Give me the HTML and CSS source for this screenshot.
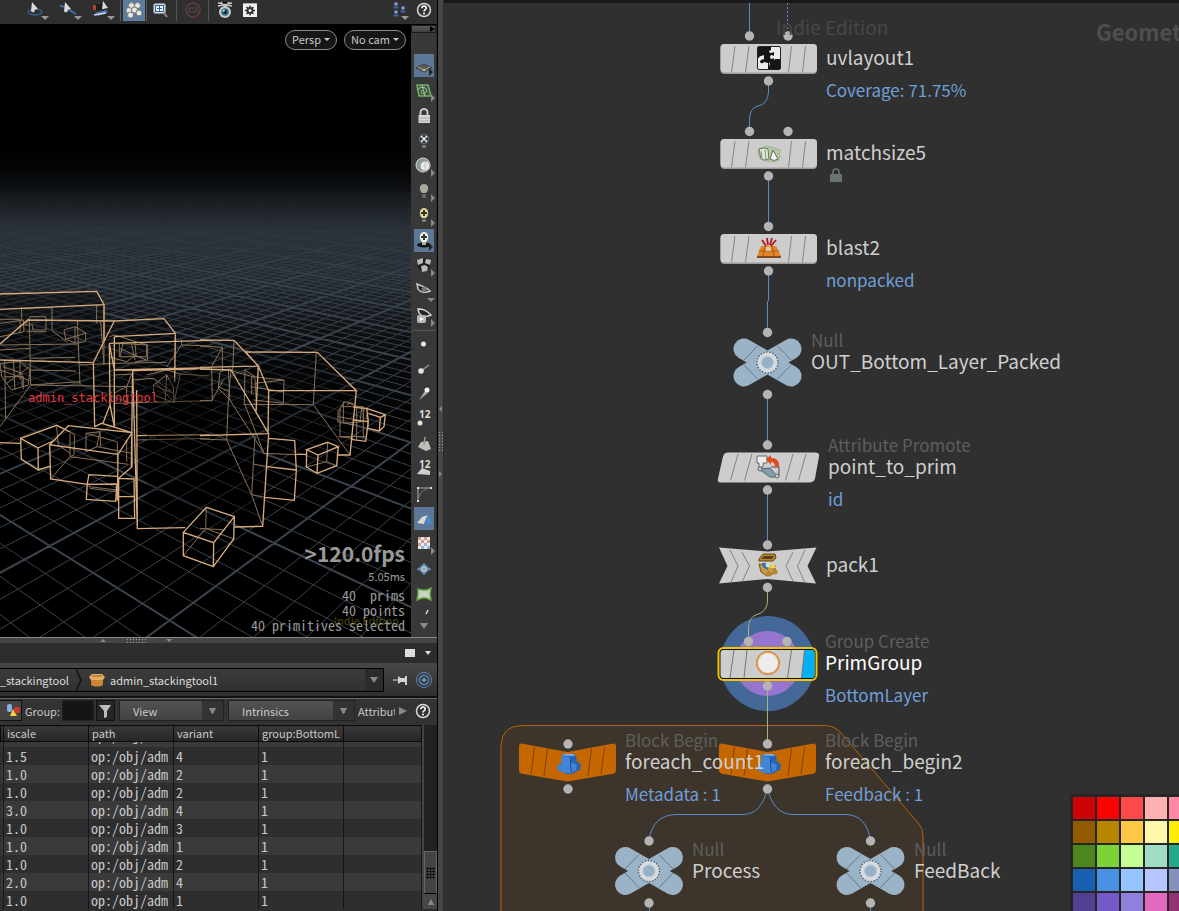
FILE: index.html
```html
<!DOCTYPE html>
<html lang="en">
<head>
<meta charset="utf-8">
<title>admin_stackingtool1</title>
<link rel="stylesheet" href="styles.css">
</head>
<body>
<div class="app">
  <section class="left">
    <header class="topbar">
      <button class="tool wide menu" aria-label="View tool"><svg width="20" height="20" viewBox="0 0 20 20"><ellipse cx="9" cy="12" rx="7" ry="3" fill="none" stroke="#3f5c8c" stroke-width="1.6"/><path d="M6 2l6 7-3 .5-1 3-3-1z" fill="#dcdcdc"/></svg></button>
      <button class="tool wide menu" aria-label="Select tool"><svg width="20" height="20" viewBox="0 0 20 20"><path d="M1 6c5-1 10 5 16 8" fill="none" stroke="#3f6db0" stroke-width="2"/><path d="M6 2l6 7-3 .5-1 3-3-1z" fill="#dcdcdc"/></svg></button>
      <button class="tool wide menu" aria-label="Secure selection"><svg width="20" height="20" viewBox="0 0 20 20"><rect x="3" y="4" width="9" height="6" fill="#1c1c1c"/><path d="M1 5h3v5H1z" fill="#b04334"/><path d="M3 13l11-3 2 2-10 4z" fill="#4c78bb"/><path d="M2 15l12-2" stroke="#cfd5dc" stroke-width="1.5"/><path d="M11 1l5 7-3 .5-3 1z" fill="#dcdcdc"/></svg></button>
      <span class="vsep"></span>
      <button class="tool active" aria-label="Select objects"><svg width="18" height="18" viewBox="0 0 18 18" fill="#e6e6e2" stroke="#77797a"><circle cx="6.500" cy="4.500" r="3"/><circle cx="12.500" cy="4.500" r="3"/><circle cx="4" cy="9.500" r="3"/><circle cx="9.500" cy="9" r="3"/><circle cx="14" cy="12" r="3"/><circle cx="5.500" cy="14" r="3"/></svg></button>
      <span class="vsep tight"></span>
      <button class="tool mid" aria-label="Zoom"><svg width="18" height="18" viewBox="0 0 18 18"><rect x="1.500" y="2.500" width="12" height="10" rx="2" fill="#cdd6e2" stroke="#8a8a8a"/><rect x="3.500" y="4.500" width="8" height="6" fill="#f1f4f8" stroke="#3566a5"/><path d="M5 7.500h5M7.500 5v5" stroke="#3566a5"/><path d="M12 12l3 4" stroke="#888" stroke-width="2"/></svg></button>
      <span class="vsep"></span>
      <button class="tool mid" aria-label="Stop"><svg width="18" height="18" viewBox="0 0 18 18" fill="none" stroke="#6b3a3a"><circle cx="9" cy="9" r="7" stroke-width="1.500"/><rect x="5" y="7" width="8" height="4" stroke="#5d4747"/></svg></button>
      <span class="vsep"></span>
      <button class="tool mid" aria-label="Snapshot"><svg width="18" height="18" viewBox="0 0 18 18"><path d="M2 2l14 3M16 2L2 5M5 1l4 5 4-5" stroke="#ccc" stroke-width="1.300"/><circle cx="9" cy="11" r="6" fill="#c9c9c6"/><circle cx="9" cy="11" r="3.800" fill="#2f7692"/><circle cx="9" cy="11" r="2" fill="#131d22"/><circle cx="7.800" cy="9.800" r="1" fill="#d8eef5"/></svg></button>
      <button class="tool" aria-label="Settings"><svg width="16" height="16" viewBox="0 0 16 16"><rect x="1" y="1" width="14" height="14" fill="#f2f2f2"/><path d="M1 1.500h14" stroke="#aaa"/><circle cx="8" cy="8.500" r="2.500" fill="none" stroke="#333" stroke-width="2"/><path d="M8 3.500v3M8 10.500v3M3 8.500h3M10 8.500h3M4.500 5l2 2M9.500 10l2 2M11.500 5l-2 2M6.500 10l-2 2" stroke="#333" stroke-width="1.500"/></svg></button>
      <span class="grow"></span>
      <button class="tool menu" aria-label="Display options"><svg width="16" height="18" viewBox="0 0 16 18"><g fill="#7fa3d8"><circle cx="4" cy="3" r="1.800"/><circle cx="11" cy="7" r="1.800"/><circle cx="4" cy="11" r="1.800"/></g><path d="M1.500 6.500h5M8.500 10.500h5M1.500 14.500h5" stroke="#3c66a8" stroke-width="2"/></svg></button>
      <button class="tool" aria-label="Help"><svg width="16" height="16" viewBox="0 0 16 16"><circle cx="8" cy="8" r="6.500" fill="#333" stroke="#d8d8d8" stroke-width="1.500"/><path d="M5.800 6.200c0-3 4.600-2.800 4.400 0C10.100 7.700 8 7.700 8 9.600" fill="none" stroke="#fff" stroke-width="1.600"/><circle cx="8" cy="11.600" r="1" fill="#fff"/></svg></button>
    </header>

    <div class="stage">
      <div class="viewport">
        <svg class="scene" aria-label="Perspective view">
          <defs>
            <linearGradient id="sky" x1="0" y1="150" x2="0" y2="440" gradientUnits="userSpaceOnUse"><stop offset="0" stop-color="#000"/><stop offset=".12" stop-color="#080a0c"/><stop offset=".28" stop-color="#262c33"/><stop offset=".45" stop-color="#22282f"/><stop offset=".65" stop-color="#0c0e10"/><stop offset="1" stop-color="#000"/></linearGradient>
            <linearGradient id="fog" x1="0" y1="170" x2="0" y2="640" gradientUnits="userSpaceOnUse"><stop offset="0" stop-color="#000"/><stop offset=".13" stop-color="#555"/><stop offset=".24" stop-color="#ddd"/><stop offset=".4" stop-color="#fff"/><stop offset="1" stop-color="#fff"/></linearGradient>
            <mask id="far" maskUnits="userSpaceOnUse" x="0" y="0" width="2000" height="2000"><rect width="2000" height="2000" fill="url(#fog)"/></mask>
          </defs>
          <g transform="translate(0 -25)">
            <rect y="25" width="100%" height="620" fill="url(#sky)"/>
            <g mask="url(#far)"><path id="minor" class="grid-minor"/><path id="major" class="grid-major"/></g>
            <g transform="translate(0 270) scale(.33333)">
              <path class="shade" d="M0 72L290 64 312 104 312 150 492 146 526 190 526 211 630 211V494L412 497 398 590 0 520Z"/>
              <path class="wire dim" d="M65 112V150M65 115L156 112V182L200 215M0 160L70 150 72 185 0 200M0 148H60V190M75 165L90 140H138V180H98V165ZM80 185H138M88 150L92 345M232 153L240 343M0 240L90 235M0 225L235 222M92 265L225 262M92 300L228 303M92 345L240 335M92 345L398 350M192 180L225 170 257 188V214L230 220 197 208ZM225 170V216M197 208L257 190M92 345L0 470M0 280L60 275 90 300 85 345 35 360 5 320ZM14 270L17 445M40 270L45 360M0 300L85 330M20 340L88 290M14 320H70V358M8 290L66 310V350M60 275V330M302 153L312 285M290 104V160M312 104V280M328 200L345 195 405 215 408 255 380 275 330 262M358 220V260H440V225ZM358 235L440 270M370 215L360 262M395 225L405 270M405 215L443 225V272L405 275M240 285L340 280M345 280L500 277M500 290L545 225V210M545 225L630 228M345 315L395 312 380 350 345 368M345 400L630 392M380 350V400M460 345L500 315 520 350 522 398 462 375ZM460 345L520 370M500 315L495 398M470 340L515 390M440 315L500 300 540 312 630 318M522 398L540 315M395 330L460 325 515 365M412 510L630 505M258 490L300 485 290 530 258 545ZM258 490L350 515M300 485L302 530M290 530L396 550M170 470L175 525 210 550M210 486L224 495 222 555 210 560M152 627L210 560 385 583M210 560V490M267 640V650L350 660M270 655L345 665M352 515V580M380 510V575"/>
              <path class="wire" d="M0 72L290 64 312 104 0 118M312 104V215M0 222L83 150 343 153 280 278 0 270M280 278L284 470M343 153L492 146 526 190 343 200M343 200V470M526 190L524 335M328 220L630 211M328 220L343 300 630 293M328 220L330 405 308 462M330 405L343 470M343 300H398M398 302L630 296M398 302L412 776 556 773M412 497L630 494M398 302L394 590M62 505L170 466 210 486M62 505L64 568 115 600 114 534ZM114 534L165 510M115 600L152 588M149 524L205 467 396 488 354 553ZM149 524L152 627 262 643 350 642M354 553L352 692M396 488V590L356 625M284 470L305 460 396 488M262 640L267 614 352 619M262 640L259 688 347 694 350 642M356 625L402 627 404 745H356ZM356 680H402M0 518L62 520M410 360L412 770"/>
            </g>
            <g transform="translate(200 320) scale(.33333)">
              <path class="shade" d="M137 96L352 97 469 212 450 405 200 400 188 619H-160V200Z"/>
              <path class="wire dim" d="M0 78L67 82 35 140 37 242H0M102 61L98 155M35 242L70 180M67 82V150M60 155L85 148 90 240M85 150L165 172M55 200L88 215M60 155L55 205 90 240M90 240L192 400 285 404M93 150L85 240 80 360 155 524 195 532M80 360L0 357M135 148L133 250 192 400M135 150L165 170M155 172V225M155 170L252 180 250 250M165 190L252 180M150 200L250 215M130 253L340 254 450 405M349 97L340 254M165 175L170 270M160 240L250 250M165 350L160 435 155 524M162 433L206 440M188 619L155 524M418 270L432 245 460 250M415 270L413 305 460 315M420 265V350M430 248V305M415 290L470 300M425 260H490V305L430 310M440 255L450 250 495 270M470 265V360M485 265L480 305M490 270V355M415 350L460 355M420 350H497M500 285L505 325M383 367L380 425 320 441M380 425L410 437M19 562L17 625 101 657M17 625L-50 707M0 625L75 630"/>
              <path class="wire" d="M0 60L102 61 175 138 0 142M175 138L206 212M137 96L352 97 469 212 206 212M137 96L175 138M469 212L450 405 410 405M322 403H285M0 147L93 150 206 341 0 347M206 212L204 341M175 138L168 275M206 341L188 619 104 621M206 355L284 362 289 450 283 541 195 532M200 440L289 450M320 389L383 367 415 380 354 405ZM320 389L319 441 351 460 410 437 415 380M354 405L351 460M460 262L500 265 556 284 552 320 538 333 505 325M505 280L541 292 538 333M541 292L556 284M500 265L505 305 497 364 452 358M460 300L505 305M-50 637L19 562 103 590 41 668ZM-50 637V707L40 740 41 668M40 740L101 657 103 590"/>
            </g>
          </g>
        </svg>
        <div class="cams"><button class="pill">Persp<i></i></button><button class="pill">No cam<i></i></button></div>
        <span class="gizmo">admin_stackingtool</span>
        <span class="edition">Indie Edition</span>
        <div class="stats"><strong>&gt;120.0fps</strong><small>5.05ms</small><pre>40  prims
40 points
40 primitives selected</pre></div>
      </div>
      <nav class="side" aria-label="Display toolbar">
        <button class="stow" aria-label="Collapse toolbar"></button>
        <div class="icons">
          <button class="ib active more" aria-label="Reference plane"><svg viewBox="0 0 20 20"><path d="M2 12l8-4 8 4-8 4z" fill="#b9b9ae" stroke="#333"/><path d="M6 10l8 4M8 9l8 4M14 10l-8 4M12 9l-8 4" stroke="#444"/></svg></button>
          <button class="ib more" aria-label="Construction plane"><svg viewBox="0 0 20 20"><path d="M3 4h11l3 11H5z" fill="#3e5940" stroke="#76ad62" stroke-width="1.500"/><path d="M3 9c4-5 12-2 9 2s-6 0-4-2M8 4l3 11" fill="none" stroke="#a9c9a2"/></svg></button>
          <button class="ib" aria-label="Lock"><svg viewBox="0 0 20 20"><path d="M6.500 10V6.500a3.500 3.500 0 017 0V10" fill="none" stroke="#c7c7c7" stroke-width="2"/><rect x="4.500" y="9" width="11.500" height="8" fill="#d8d6d1"/><path d="M5 12h11M5 15h11" stroke="#aaa"/></svg></button>
          <button class="ib" aria-label="No lighting"><svg viewBox="0 0 20 20"><circle cx="10" cy="8" r="4.500" fill="#2d3438" stroke="#718089"/><path d="M7 5l6 6M13 5l-6 6" stroke="#eee" stroke-width="1.500"/><path d="M8 14h4v3H8z" fill="#777"/></svg></button>
          <button class="ib more" aria-label="Headlight"><svg viewBox="0 0 20 20"><circle cx="9" cy="9" r="7" fill="#8b9696" stroke="#d6dedd"/><circle cx="11" cy="10" r="5" fill="#e8e8e8" stroke="#999"/><path d="M11 7v6" stroke="#bbb"/></svg></button>
          <button class="ib more" aria-label="Normal lighting"><svg viewBox="0 0 20 20"><path d="M8 12C4 8 6 3 10 3s6 5 2 9z" fill="#a9a9a2"/><path d="M8 13h4v4H8z" fill="#666"/></svg></button>
          <button class="ib more" aria-label="High quality lighting"><svg viewBox="0 0 20 20"><path d="M8 12C4 8 6 2 10 2s6 6 2 10z" fill="#ded99a"/><path d="M10 4v6M7 7h6" stroke="#36352a" stroke-width="2"/><path d="M8 13h4v3H8z" fill="#777"/></svg></button>
          <button class="ib active more" aria-label="Shadows"><svg viewBox="0 0 20 20"><ellipse cx="10" cy="14" rx="7" ry="2.500" fill="#101418"/><path d="M8 11C4 7 6 1 10 1s6 6 2 10z" fill="#f4f3e7"/><path d="M10 3v6M7 6h6" stroke="#333" stroke-width="2"/><path d="M8 11h4v3H8z" fill="#b6b39a"/></svg></button>
          <button class="ib more" aria-label="Materials"><svg viewBox="0 0 20 20"><circle cx="10" cy="9" r="6.500" fill="#1e1e1e"/><path d="M3 4l6-2v5l-5 2zM12 3l5 1-1 5-5-2zM7 10l4-1 3 2-1 4-5 1z" fill="#b9b9b9"/></svg></button>
          <button class="ib more down" aria-label="Visibility"><svg viewBox="0 0 20 20"><path d="M3 3c5 2 9 3 13 7-4 2-9 2-12-2z" fill="#262626" stroke="#c5c5c5" stroke-width="1.500"/><circle cx="10" cy="8.500" r="2.500" fill="#777"/></svg></button>
          <button class="ib more" aria-label="Snapshot view"><svg viewBox="0 0 20 20"><path d="M4 3c5 0 8 1 13 6-4 2-9 2-12-2z" fill="#262626" stroke="#d5d5d5" stroke-width="1.500"/><rect x="3" y="9" width="9" height="8" rx="2" fill="#b5b9b7"/><path d="M6 11l4 2-4 2z" fill="#fff"/></svg></button>
          <span class="hsep"></span>
          <button class="ib" aria-label="Points"><svg viewBox="0 0 20 20"><circle cx="9.500" cy="10" r="2.500" fill="#e8e8e8"/></svg></button>
          <button class="ib" aria-label="Point normals"><svg viewBox="0 0 20 20"><path d="M7 12l8-6" stroke="#8e9999" stroke-width="1.500"/><circle cx="7" cy="12" r="2.800" fill="#e3e3df"/></svg></button>
          <button class="ib" aria-label="Point trails"><svg viewBox="0 0 20 20"><path d="M5 16l6-9 3 2z" fill="#aaa"/><circle cx="13" cy="6" r="2.500" fill="#f0f0ea"/></svg></button>
          <button class="ib num" aria-label="Point numbers"><b>12</b><svg viewBox="0 0 20 20"><circle cx="6" cy="14" r="2.500" fill="#e5e5df"/></svg></button>
          <button class="ib" aria-label="Primitive normals"><svg viewBox="0 0 20 20"><path d="M4 13l3-5 7-1 3 8-5 2z" fill="#bfbfba"/><path d="M10 11l1-8" stroke="#999" stroke-width="1.500"/></svg></button>
          <button class="ib num" aria-label="Primitive numbers"><b>12</b><svg viewBox="0 0 20 20"><path d="M3 15l5-6 8 3v4z" fill="#cfcfca"/></svg></button>
          <button class="ib" aria-label="Hulls"><svg viewBox="0 0 20 20"><path d="M4 17V4h13" fill="none" stroke="#aaa"/><path d="M4 16C5 10 9 5 16 4" fill="none" stroke="#777"/><path d="M3 3h2v2H3zM16 3h2v2h-2zM3 16h2v2H3z" fill="#ddd"/></svg></button>
          <button class="ib active" aria-label="Backfaces"><svg viewBox="0 0 20 20"><path d="M3 14l5-6 6-2-4 9z" fill="#ddd9cc"/><path d="M14 5l4 9-5 1-3-1z" fill="#4f86c9"/></svg></button>
          <button class="ib more" aria-label="Texture"><svg viewBox="0 0 20 20"><path d="M4 3h12v12H4z" fill="#e8e8e8"/><path d="M4 3h3v3H4zM10 3h3v3h-3zM7 6h3v3H7zM13 6h3v3h-3zM4 9h3v3H4z" fill="#d59a91"/><path d="M10 9h3v3h-3zM7 12h3v3H7zM13 12h3v3h-3z" fill="#9ab4d8"/></svg></button>
          <button class="ib" aria-label="Multiview"><svg viewBox="0 0 20 20"><path d="M10 4l7 6-7 6-7-6z" fill="#4776ad"/><path d="M10 6l4 4-4 4-4-4z" fill="#dad9d0"/><path d="M10 4v12M3 10h14" stroke="#8293a8"/></svg></button>
          <button class="ib" aria-label="Guides"><svg viewBox="0 0 20 20"><path d="M4 5l4 1h5l4-2-1 6 1 6-5-2H8l-5 2 1-6z" fill="#c9d4c3" stroke="#63a544" stroke-width="1.500"/></svg></button>
        </div>
        <svg class="stub" width="12" height="8" viewBox="0 0 12 8"><path d="M8 7l2-4" stroke="#ddd" stroke-width="1.500"/></svg>
        <button class="scrolldown" aria-label="More tools"></button>
      </nav>
    </div>

    <div class="hsplit"><i class="tri up"></i><i class="grip"></i><i class="tri dn"></i></div>

    <div class="panehead"><i class="sq"></i><i class="tri dn light"></i></div>
    <div class="pathbar">
      <div class="path"><button class="crumb first"><span>admin_stackingtool</span></button><svg class="chev" width="8" height="22" viewBox="0 0 8 22"><path d="M1 0l5 11-5 11" fill="none" stroke="#111" stroke-width="1.500"/></svg><button class="crumb"><svg width="16" height="14" viewBox="0 0 16 14"><path d="M3 1h10l3 3-2 3H2L0 4z" fill="#e3ad62"/><path d="M2 7h12v5c-3 2-9 2-12 0z" fill="#c98634"/><path d="M3 3h10" stroke="#8f5b20"/></svg><span>admin_stackingtool1</span></button><button class="drop" aria-label="Path history"></button></div>
      <button class="pin" aria-label="Pin"><svg width="18" height="16" viewBox="0 0 18 16"><path d="M1 8h6" stroke="#aaa" stroke-width="1.500"/><path d="M6 4l3 2h4V4h2v9h-2v-3H9l-3 2z" fill="#d2d2d2"/></svg></button>
      <button class="pin" aria-label="Follow selection"><svg width="18" height="18" viewBox="0 0 18 18" fill="none" stroke="#5b83b9"><circle cx="9" cy="9" r="7.500"/><circle cx="9" cy="9" r="4.500" stroke-width="1.500"/><circle cx="9" cy="9" r="1.500" fill="#8db2ea"/></svg></button>
    </div>

    <div class="filters">
      <button class="prims" aria-label="Primitives"><svg width="16" height="16" viewBox="0 0 16 16"><rect x="2" y="1" width="5" height="8" rx="2" fill="#85aee0"/><path d="M8 6l4 7H5z" fill="#f3d34c"/><circle cx="12" cy="7" r="3.200" fill="#cf3a2a"/></svg></button>
      <label for="grp">Group:</label><input id="grp" type="text">
      <button class="funnel" aria-label="Filter"><svg width="14" height="16" viewBox="0 0 14 16"><path d="M1 2h12L9 8v6l-3 1V8z" fill="#bdbdbd"/></svg></button>
      <select class="view" aria-label="View"><option>View</option></select>
      <select class="intr" aria-label="Intrinsics"><option>Intrinsics</option></select>
      <span class="attr">Attribut</span><i class="tri rt"></i>
      <button class="help" aria-label="Spreadsheet help"><svg width="16" height="16" viewBox="0 0 16 16"><circle cx="8" cy="8" r="6.500" fill="#333" stroke="#d8d8d8" stroke-width="1.500"/><path d="M5.800 6.200c0-3 4.600-2.800 4.400 0C10.100 7.700 8 7.700 8 9.600" fill="none" stroke="#fff" stroke-width="1.600"/><circle cx="8" cy="11.600" r="1" fill="#fff"/></svg></button>
    </div>

    <div class="sheet">
      <table>
        <colgroup><col class="c0"><col class="c"><col class="c"><col class="c"><col class="c"><col></colgroup>
        <thead><tr><th></th><th>iscale</th><th>path</th><th>variant</th><th>group:BottomL</th><th></th></tr></thead>
        <tbody>
          <tr class="cut"><td></td><td></td><td><div>op:/obj/adm</div></td><td></td><td></td><td></td></tr>
          <tr><td></td><td>1.5</td><td>op:/obj/adm</td><td>4</td><td>1</td><td></td></tr>
          <tr><td></td><td>1.0</td><td>op:/obj/adm</td><td>2</td><td>1</td><td></td></tr>
          <tr><td></td><td>1.0</td><td>op:/obj/adm</td><td>2</td><td>1</td><td></td></tr>
          <tr><td></td><td>3.0</td><td>op:/obj/adm</td><td>4</td><td>1</td><td></td></tr>
          <tr><td></td><td>1.0</td><td>op:/obj/adm</td><td>3</td><td>1</td><td></td></tr>
          <tr><td></td><td>1.0</td><td>op:/obj/adm</td><td>1</td><td>1</td><td></td></tr>
          <tr><td></td><td>1.0</td><td>op:/obj/adm</td><td>2</td><td>1</td><td></td></tr>
          <tr><td></td><td>2.0</td><td>op:/obj/adm</td><td>4</td><td>1</td><td></td></tr>
          <tr><td></td><td>1.0</td><td>op:/obj/adm</td><td>1</td><td>1</td><td></td></tr>
        </tbody>
      </table>
      <div class="scroll"><div class="thumb"><i></i></div><button class="scrollup" aria-label="Scroll up"></button></div>
    </div>
  </section>

  <div class="vsplit"><i class="tri lf"></i><i class="vgrip"></i><i class="tri rt"></i></div>

  <main class="network">
    <svg class="graph" aria-hidden="true">
      <defs>
        <g id="sop"><rect x="-47.500" y="-14.500" width="96.500" height="30" rx="4" fill="#9c9c9c"/><rect x="-47.500" y="-14.500" width="96.500" height="28.500" rx="4" fill="#cdcdcd"/><path d="M-36.500 14l3.500-26.500M-22.500 14l3.500-26.500M20.500 14l3-26.500M34.500 14l3-26.500" stroke="#858585"/></g>
        <g id="null"><path d="M-23.500-13.500l47 27M23.500-13.500l-47 27" stroke="#9ab3c6" stroke-width="21" stroke-linecap="round"/><path d="M-24-2l14-14.500M24-2l-14-14.500M-24 2l14 14.500M24 2l-14 14.500" stroke="#66798a"/><circle r="10.500" fill="#d5dce1"/><circle r="10.500" fill="none" stroke="#555e66" stroke-width="1.500" stroke-dasharray="1.300 1.700"/><circle r="6" fill="#96b0c5" stroke="#b6c5d2"/></g>
        <g id="block"><path d="M-46-20.500l46 8.500 46-8.500q2.500 0 2.500 2.500v24q0 3-3 3.700L0 17.500l-45.500-7.800q-3-.700-3-3.700v-24q0-2.500 2.500-2.500z" fill="#c46700"/><path d="M-33-17l-3.500 27M-20-15l-3.500 27M24-15l-3.500 27M37-17l-3.500 27" stroke="#7c4300"/><path d="M-6-9l3-1H6l3 2v5l4 3v6l-4 1-4 3h-6l-4-3-3-1v-6l4-2z" fill="#2566b8"/><path d="M-6-8l9 1v6l6 1v5l-5 4h-8l-6-3V1l4-1z" fill="#4285d6"/><path d="M-6-8.500l4-1.500h7l3 2z" fill="#7db4f2"/><path d="M3-6v7l1 7" stroke="#174d92" fill="none"/></g>
      </defs>
      <g transform="translate(-444 0)">
        <path d="M501 1200V745Q502 726 521 725.500H826Q835 726 841 733L919 824Q923 829 923 836V1200" fill="#3d352b" stroke="#b66200"/>
        <circle cx="767.500" cy="663.500" r="47.500" fill="#446898"/><circle cx="767.500" cy="663.500" r="32.500" fill="#9575cd"/>
        <g fill="none" stroke="#5d8ac6">
          <path d="M749.500 3V36M768.500 81V92Q768 104 758 106 749.500 108 749.500 120V131M768.500 176V227M768.500 271V300L767.500 302V332M767.500 395V445M767.500 490V545"/>
          <path d="M787.500 3V36" stroke-dasharray="2 2"/>
          <path d="M767.500 788Q762 814 743 814.500H676Q653 815 649 840M767.500 788Q773 814 793 814.500H846Q866 815 870.500 840M649.500 903V940M870.500 903V940"/>
          <path d="M767.500 588V601Q767 612 757 614.500 748.500 617 748.500 629V641M767.500 686V744" stroke="#9bb97f"/>
        </g>
        <use href="#sop" x="768" y="58.500"/><use href="#sop" x="768" y="153.500"/><use href="#sop" x="768" y="248.500"/>
        <use href="#null" x="767.500" y="362.500"/><use href="#null" x="649" y="871"/><use href="#null" x="870.500" y="871"/>
        <path d="M728 452.500h87q5 0 4 4l-4 22q-1 4-6 4h-88q-4 0-3-4l5-22q1-4 5-4z" fill="#cdcdcd"/><path d="M738 454l-7.500 26.500M752 454l-7.500 26.500M793 454l-7.500 26.500M806 454l-7.500 26.500" stroke="#858585"/>
        <path d="M719 547.500l48.500 4 49-4-9 18.500 8.500 17.500-48.500-4.500-48.500 4.500L727.500 566z" fill="#cdcdcd"/><path d="M730 550l8 16-7 16M742 552l7.500 14-7 15M805 550l-7.500 16 7 16M793 552l-7 14 7 15" fill="none" stroke="#858585"/>
        <rect x="718.500" y="648" width="98" height="32" rx="5" fill="#111" stroke="#f2c500" stroke-width="2"/>
        <rect x="720.500" y="650" width="94" height="28" rx="3" fill="#cdcdcd"/><path d="M804.500 650h7q3 0 3 3v22q0 3-3 3h-10z" fill="#00aff4"/><path d="M734 650l-4 28M747 650l-3 28M791.500 650l-4 28M804.500 650l-3 28" stroke="#777"/>
        <circle cx="768" cy="663" r="11" fill="#ececec" stroke="#e3a55f" stroke-width="2"/><circle cx="768" cy="663" r="11.500" fill="none" stroke="#b06a25" stroke-dasharray="1 1"/>
        <use href="#block" x="567.500" y="764"/><use href="#block" x="767.500" y="764"/>
        <g fill="#b4b4b4">
          <circle cx="749.500" cy="36" r="4.700"/><circle cx="788" cy="36" r="4.700"/><circle cx="768.500" cy="81" r="4.700"/><circle cx="749.500" cy="131.500" r="4.700"/><circle cx="788" cy="131.500" r="4.700"/><circle cx="768.500" cy="176" r="4.700"/><circle cx="768.500" cy="226.500" r="4.700"/><circle cx="768.500" cy="271" r="4.700"/><circle cx="767.500" cy="332.500" r="4.700"/><circle cx="767.500" cy="394.500" r="4.700"/><circle cx="767.500" cy="445" r="4.700"/><circle cx="767.500" cy="490" r="4.700"/><circle cx="767.500" cy="545" r="4.700"/><circle cx="767.500" cy="587.500" r="4.700"/><circle cx="748.500" cy="641.500" r="4.700"/><circle cx="787" cy="641.500" r="4.700"/><circle cx="767.500" cy="686" r="4.700"/><circle cx="568" cy="744" r="4.700"/><circle cx="568" cy="789" r="4.700"/><circle cx="767.500" cy="744" r="4.700"/><circle cx="767.500" cy="789" r="4.700"/><circle cx="649" cy="841" r="4.700"/><circle cx="649" cy="903" r="4.700"/><circle cx="870.500" cy="841" r="4.700"/><circle cx="870.500" cy="903" r="4.700"/>
        </g>
        <g transform="translate(757 46)"><rect x=".5" y=".5" width="23" height="23" rx="1.500" fill="#ececec" stroke="#222"/><path d="M1 1h13v3l-2 1q0 2 2 2l3-1v4l-2-1q-2 0-2 2t2 2l2-1v3l-3 1q-2 0-2 2t2 2v3h-3v-6l-4-1q-1 2-3 1t0-3l3-1V9l-3 1q-2 0-2 2H1z" fill="#151515"/><path d="M14 14q3 2 4-1h5v10h-9v-3q-2 0-1-3z" fill="#151515"/></g>
        <g transform="translate(757 145)"><path d="M1 4l9-3 13 4-1 10-6 2-10-2-4-3z" fill="#b7c8a6" stroke="#9db394"/><path d="M2 4q5-2 9 0l1 10q-5 2-8 0z" fill="#dfe5d7" stroke="#69795f"/><path d="M4 6l1 7M8 5l1 9" stroke="#8a9a80"/><path d="M16 5l5 9q-4 3-8 0z" fill="#f5f5f1" stroke="#5e6e5a"/></g>
        <g transform="translate(757 237)"><path d="M4 9h15l5 10H0z" fill="#e5852c"/><path d="M0 19h24v2H0z" fill="#7f4a1d"/><path d="M2 14h20M8 9l-2 10M15 9l2 10" stroke="#a8591a"/><path d="M9 9L5 3M11 8L10 1M13 8l2-7M14 9l5-6" stroke="#b4161e" stroke-width="1.800"/><rect x="9" y="10" width="5" height="4" fill="#e8c3a8"/></g>
        <g transform="translate(756 455)"><path d="M1 1h10v7H7v4H3V8H1z" fill="#eee" stroke="#666"/><path d="M3 14l11-1 8 9-8 0z" fill="#829dab" stroke="#566"/><path d="M15 12h8v9" fill="none" stroke="#777" stroke-width="1.500"/><circle cx="21" cy="21" r="2" fill="#ccc" stroke="#666"/><circle cx="4" cy="14" r="2" fill="#ccc" stroke="#666"/><path d="M10 4l5-4v3q9 0 8 9h-4q0-5-4-5v3z" fill="#de4a1c"/></g>
        <g transform="translate(757 553)"><path d="M2 6l4-5h12l1 4-3 3H2z" fill="#b58a35" stroke="#684510"/><path d="M4 6l3-3h10l-2 3z" fill="#574018"/><path d="M2 11l8 2h8v7l-8 3-6-4z" fill="#c69a42" stroke="#77551b"/><path d="M5 10h6v7l-5-3z" fill="#2c72ae"/><path d="M15 9l4 6h-6z" fill="#f4d954"/><circle cx="11" cy="12" r="2.500" fill="#d0dde0"/><circle cx="12" cy="21" r="2.500" fill="#b38330"/><circle cx="18" cy="19" r="2.500" fill="#b38330"/></g>
        <g transform="translate(830 168)"><path d="M3 6V4a3 3 0 016 0v2" fill="none" stroke="#6d7775" stroke-width="1.500"/><rect y="6" width="12" height="8" rx="1" fill="#697472"/></g>
      </g>
    </svg>
    <span class="mark">Indie Edition</span>
    <span class="context">Geometry</span>
    <div class="label uvlayout"><b>uvlayout1</b><em>Coverage: 71.75%</em></div>
    <div class="label matchsize"><b>matchsize5</b></div>
    <div class="label blast"><b>blast2</b><em>nonpacked</em></div>
    <div class="label outnull"><span>Null</span><b>OUT_Bottom_Layer_Packed</b></div>
    <div class="label promote"><span>Attribute Promote</span><b>point_to_prim</b><em>id</em></div>
    <div class="label pack"><b>pack1</b></div>
    <div class="label primgroup"><span>Group Create</span><b>PrimGroup</b><em>BottomLayer</em></div>
    <div class="label fcount"><span>Block Begin</span><b>foreach_count1</b><em>Metadata : 1</em></div>
    <div class="label fbegin"><span>Block Begin</span><b>foreach_begin2</b><em>Feedback : 1</em></div>
    <div class="label process"><span>Null</span><b>Process</b></div>
    <div class="label feedback"><span>Null</span><b>FeedBack</b></div>
    <div class="palette" id="palette"></div>
  </main>
</div>
<script src="scene.js"></script>
</body>
</html>
```
FILE: styles.css
```css
* { box-sizing: border-box; }
html, body { height: 100%; }
body { margin: 0; background: #303030; color: #c8c8c8; font: 12px/18px "Noto Sans CJK SC", "Noto Sans", sans-serif; overflow: hidden; }
button { padding: 0; border: 0; background: none; color: inherit; font: inherit; display: flex; align-items: center; justify-content: center; }
svg { display: block; flex: none; }
.app { display: flex; height: 100%; }
.left { flex: 0 0 438px; min-width: 0; display: flex; flex-direction: column; border-right: 1px solid #000; background: #2e2e2e; }

.topbar { flex: none; height: 25px; padding: 0 1px 4px 19px; display: flex; align-items: center; border-bottom: 1px solid #000; background: #2f2f2f; }
.tool { position: relative; width: 24px; height: 21px; flex: none; }
.tool.wide { width: 33px; }
.tool.mid { width: 27px; }
.tool.active { width: 22px; background: #5c7c9f; }
.menu::after { content: ""; position: absolute; right: 3px; bottom: 1px; border: 4px solid transparent; border-top-color: #999; border-bottom: 0; }
.vsep { width: 1px; height: 21px; margin: 0 2px; background: #555; flex: none; }
.vsep.tight { margin: 0 0 0 1px; }
.grow { flex: 1; }

.stage { flex: 1; min-height: 0; display: flex; background: #000; }
.viewport { flex: 1; position: relative; overflow: hidden; }
.scene { width: 100%; height: 100%; position: absolute; inset: 0; }
.grid-minor { fill: none; stroke: #3a424b; stroke-width: 1; }
.grid-major { fill: none; stroke: #3b444e; stroke-width: 2; }
.shade { fill: #000; opacity: .35; }
.wire { fill: none; stroke: #d5ab7e; stroke-width: 4; }
.wire.dim { stroke: #8a7256; stroke-width: 3; }
.cams { position: absolute; top: 5px; right: 5px; display: flex; gap: 7px; }
.pill { height: 20px; padding: 0 6px 2px; border: 1px solid #8a8a8a; border-radius: 10px; background: #161616; gap: 3px; font-size: 11px; line-height: 16px; }
.pill i { border: 3px solid transparent; border-top-color: #ccc; border-bottom: 0; }
.gizmo { position: absolute; left: 28px; top: 364px; color: #e5363d; font: 12px/18px "DejaVu Sans Mono", monospace; }
.edition { position: absolute; right: 12px; bottom: 8px; color: #4a4a08; font-size: 11px; }
.stats { position: absolute; right: 6px; bottom: 4px; display: flex; flex-direction: column; align-items: flex-end; color: #999; }
.stats strong { font-size: 21px; line-height: 28px; }
.stats small { font-size: 11px; line-height: 19px; }
.stats pre { margin: 2px 0 0; text-align: right; font: 14px/15px "Noto Sans Mono CJK SC", "DejaVu Sans Mono", monospace; }

.side { flex: 0 0 26px; display: flex; flex-direction: column; background: #383838; border-right: 1px solid #2c2c2c; }
.stow { height: 9px; border: 1px solid #1a1a1a; background: linear-gradient(#5a5a5a, #404040); justify-content: flex-end; }
.stow::after { content: ""; border: 3px solid transparent; border-left: 5px solid #000; border-right: 0; }
.icons { padding-top: 20px; }
.ib { width: 25px; height: 25px; position: relative; }
.ib svg { width: 20px; height: 20px; }
.ib.active { background: #5b7899; border: solid #383838; border-width: 1px 2px 1px 3px; }
.ib.more::after { content: ""; position: absolute; right: 1px; bottom: 1px; border: 4px solid transparent; border-left: 4px solid #888; border-right: 0; }
.ib.active.more::after { border-left-color: #222; }
.ib.more.down::after { border: 4px solid transparent; border-top: 4px solid #888; border-bottom: 0; }
.ib.num b { position: absolute; left: 8px; top: 2px; z-index: 1; color: #ddd; font: bold 10px/12px "Open Sans", sans-serif; }
.hsep { display: block; height: 3px; border-bottom: 1px solid #555; }
.stub { align-self: center; margin-top: 1px; }
.scrolldown::after { content: ""; margin: 8px 0; border: 4px solid transparent; border-top: 6px solid #8a8a8a; border-bottom: 0; }

.tri { display: block; border: 3px solid transparent; }
.tri.up { border-bottom-color: #888; border-top: 0; }
.tri.dn { border-top-color: #888; border-bottom: 0; }
.tri.rt { border-left-color: #888; border-right: 0; }
.tri.lf { border-right-color: #888; border-left: 0; }
.hsplit { flex: none; height: 6px; display: flex; align-items: center; padding-left: 100px; gap: 20px; border-top: 1px solid #888; background: #454545; }
.grip { width: 20px; height: 5px; background: radial-gradient(#999 25%, transparent 50%) 0 0 / 3px 3px; }
.panehead { flex: none; height: 20px; display: flex; align-items: center; justify-content: flex-end; gap: 10px; padding-right: 6px; background: #2d2d2d; }
.sq { width: 10px; height: 8px; background: #ddd; }
.tri.light { border-top: 4px solid #ddd; }

.pathbar { flex: none; height: 35px; display: flex; align-items: center; gap: 5px; padding-right: 4px; border-bottom: 2px solid #111; background: linear-gradient(#474747, #2f2f2f); }
.path { flex: 1; min-width: 0; height: 24px; display: flex; align-items: center; margin-right: 3px; border: 1px solid #000; border-left: 0; background: linear-gradient(#3b3b3b, #303030); }
.crumb { gap: 5px; font-size: 11px; color: #ddd; }
.crumb.first { width: 69px; justify-content: flex-end; overflow: hidden; }
.chev { margin: 0 6px 0 6px; }
.drop { width: 18px; height: 22px; margin-left: auto; background: #2b2b2b; }
.drop::after { content: ""; border: 4px solid transparent; border-top: 6px solid #888; border-bottom: 0; }

.filters { flex: none; height: 27px; display: flex; align-items: center; padding: 0 6px 3px 0; border-top: 1px solid #666; background: #333; font-size: 11px; }
.prims { width: 22px; height: 21px; padding-left: 4px; border: 1px solid #111; border-left: 0; background: #444; }
.filters label { padding-left: 3px; }
.filters input { width: 32px; height: 21px; margin: 0 2px; border: 1px solid #222; background: #151515; color: #ccc; }
.funnel { width: 19px; height: 21px; border: 1px solid #111; background: #262626; margin-right: 4px; }
.filters select { height: 21px; margin: 0 4px 0 0; padding: 0 0 0 13px; border: 1px solid #222; border-radius: 0; appearance: none; color: #c8c8c8; font: inherit; background: linear-gradient(#888, #888) no-repeat right 7px top 7px / 7px 1px, linear-gradient(#888, #888) no-repeat right 8px top 8px / 5px 2px, linear-gradient(#888, #888) no-repeat right 9px top 10px / 3px 2px, linear-gradient(#888, #888) no-repeat right 10px top 12px / 1px 1px, linear-gradient(#333, #333) no-repeat right / 21px 100%, linear-gradient(#525252, #424242); }
.filters .view { width: 105px; }
.filters .intr { width: 127px; margin-right: 3px; }
.attr { flex: 1; min-width: 0; overflow: hidden; }
.filters .tri { border-width: 4px 0 4px 8px; margin: 0 8px 0 4px; }

.sheet { flex: none; display: flex; padding-bottom: 2px; }
table { flex: 1; width: 100%; table-layout: fixed; border-collapse: collapse; border-right: 1px solid #161616; }
.c0 { width: 3px; }
.c { width: 85px; }
th { height: 16px; padding: 0 0 0 3px; text-align: left; font-weight: 400; font-size: 11px; line-height: 13px; border: 1px solid #0c0c0c; background: linear-gradient(#393939, #262626); white-space: nowrap; overflow: hidden; }
td { height: 18px; padding: 0 0 0 2px; border: 0 solid #161616; border-right-width: 1px; font: 14px/18px "Noto Sans Mono CJK SC", "DejaVu Sans Mono", monospace; white-space: nowrap; overflow: hidden; }
tbody tr { background: #2e2e2e; }
tbody tr:nth-child(odd) { background: #3a3a3a; }
th:first-child, td:first-child { padding: 0; }
.cut td { height: 5px; line-height: 5px; }
.cut div { height: 5px; line-height: 24px; display: flex; align-items: flex-end; overflow: hidden; }
.scroll { flex: 0 0 15px; display: flex; flex-direction: column; justify-content: flex-end; border-left: 2px solid #444; background: #222; }
.thumb { height: 43px; display: flex; align-items: center; justify-content: center; border: 1px solid #666; border-bottom-color: #000; background: #444; }
.thumb i { width: 9px; height: 12px; background: radial-gradient(#000 40%, transparent 60%) 0 0 / 3px 3px; }
.scrollup { height: 15px; background: #484848; }
.scrollup::after { content: ""; border: 3px solid transparent; border-bottom: 6px solid #8a8a8a; border-top: 0; }

.vsplit { flex: 0 0 6px; display: flex; flex-direction: column; align-items: center; justify-content: center; gap: 19px; padding-bottom: 28px; border-right: 1px solid #2a2a2a; background: #474747; }
.vgrip { width: 5px; height: 21px; background: radial-gradient(#999 25%, transparent 50%) 0 0 / 3px 3px; }

.network { flex: 1; min-width: 0; position: relative; overflow: hidden; background: #303030; border-top: 3px solid #1a1a1a; }
.graph { position: absolute; left: 0; top: -3px; width: 100%; height: calc(100% + 3px); }
.mark, .context { position: absolute; color: #474747; font-size: 19px; line-height: 24px; white-space: nowrap; }
.mark { left: 332px; top: 12px; }
.context { left: 652px; top: 16px; color: #4e4e4e; font-size: 22px; font-weight: 700; }
.label { position: absolute; display: flex; flex-direction: column; white-space: nowrap; font-size: 17px; line-height: 21px; }
.label span { color: #5e5e5e; }
.label b { font-weight: 400; font-size: 19px; color: #cfcfcf; }
.label em { font-style: normal; margin-top: 12px; color: #6f9fdb; }
.uvlayout { left: 382px; top: 43px; }
.matchsize { left: 382px; top: 138px; }
.blast { left: 382px; top: 233px; }
.outnull { left: 367px; top: 326px; }
.promote { left: 384px; top: 431px; }
.pack { left: 382px; top: 550px; }
.primgroup { left: 381px; top: 627px; }
.primgroup b { color: #fff; }
.fcount { left: 181px; top: 726px; }
.fbegin { left: 381px; top: 726px; }
.process { left: 248px; top: 835px; }
.feedback { left: 470px; top: 835px; }
.palette { position: absolute; right: 0; bottom: 0; width: 109px; height: 117px; padding: 3px 0 0 3px; display: grid; grid-template-columns: repeat(5, 22px); grid-auto-rows: 22px; gap: 2px; overflow: hidden; background: #262626; }
```
FILE: scene.js
```js
// Ground plane: two families of lines, each meeting at its own vanishing point.
const horizon = 110, base = 700;
function family(vx, origin, step, every, major) {
  let d = '';
  for (let i = -150; i <= 150; i++) {
    if ((i % every === 0) !== major) continue;
    const x = origin + i * step;
    d += `M${vx} ${horizon}L${x.toFixed(1)} ${base}`;
  }
  return d;
}
// Steps are measured along the base row.
const spread = (base - horizon) / 530;
const atBase = (vx, x) => vx + (x - vx) * spread;
const a = major => family(860, atBase(860, 143), 53.6 * spread, 5, major);
const b = major => family(-650, atBase(-650, 201), 56 * spread, 5, major);
document.getElementById('minor').setAttribute('d', a(false) + b(false));
document.getElementById('major').setAttribute('d', a(true) + b(true));

const colors = [
  '#cc0404', '#ff0000', '#ff4848', '#ffb0b0', '#ff88a4',
  '#925b00', '#b58500', '#fcc846', '#fff8aa', '#ffee00',
  '#4c871d', '#7dd335', '#c4ff94', '#9fdec4', '#26a98b',
  '#1a60b2', '#4a90e2', '#95c5ff', '#b5c5ff', '#8590bd',
  '#523f91', '#7659c8', '#9180dc', '#e368c0', '#903275'
];
const palette = document.getElementById('palette');
for (const c of colors) {
  const cell = document.createElement('button');
  cell.style.background = c;
  cell.setAttribute('aria-label', c);
  palette.append(cell);
}
```
